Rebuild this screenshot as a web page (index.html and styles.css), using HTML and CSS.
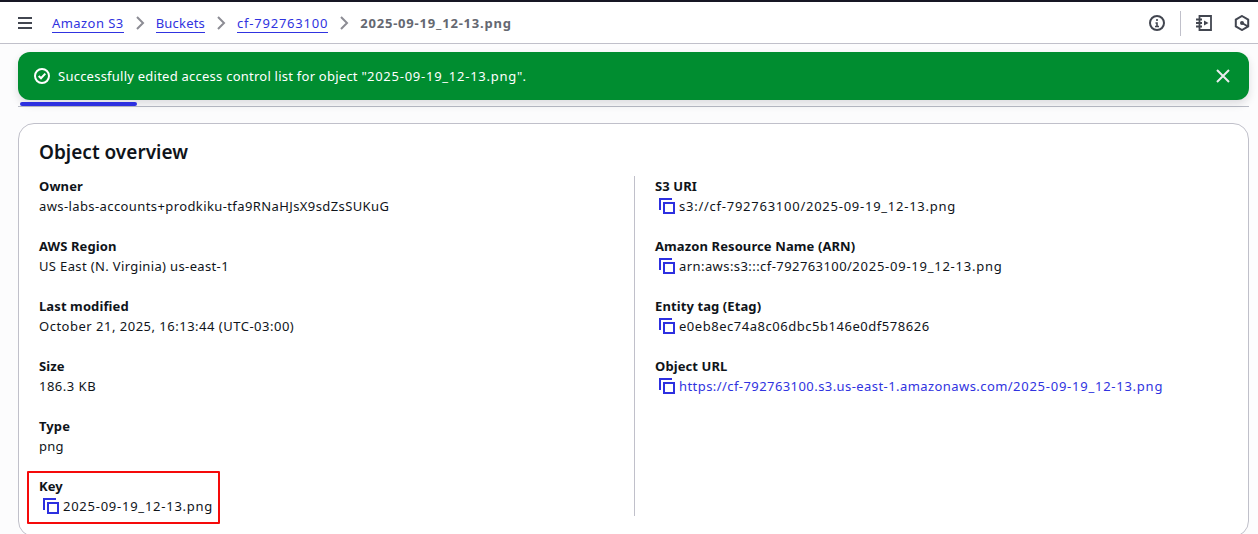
FILE: index.html
```html
<!DOCTYPE html>
<html lang="en">
<head>
<meta charset="utf-8">
<title>Object overview</title>
<link rel="stylesheet" href="styles.css">
</head>
<body>
<svg class="defs" width="0" height="0">
  <symbol id="copy" viewBox="0 0 16 16"><path d="M1 12V1h12M5 5h10v10H5z" fill="none" stroke="currentColor" stroke-width="2"/></symbol>
  <symbol id="chevron" viewBox="0 0 10 14"><path d="M2 1l6 6-6 6" fill="none" stroke="currentColor" stroke-width="2"/></symbol>
</svg>
<header class="topbar">
  <svg class="menu" viewBox="0 0 14 12"><path d="M0 1h14M0 6h14M0 11h14" stroke="currentColor" stroke-width="2"/></svg>
  <nav class="crumbs">
    <a class="link c1">Amazon S3</a>
    <svg class="chev"><use href="#chevron"/></svg>
    <a class="link c2">Buckets</a>
    <svg class="chev"><use href="#chevron"/></svg>
    <a class="link c3">cf-792763100</a>
    <svg class="chev"><use href="#chevron"/></svg>
    <span class="current">2025-09-19_12-13.png</span>
  </nav>
  <div class="tools">
    <svg class="tool" viewBox="0 0 16 16" fill="none" stroke="currentColor" stroke-width="2"><circle cx="8" cy="8" r="7"/><path d="M8 4v2M6.500 8H8v4M6 11.500h4" stroke-width="1.600"/></svg>
    <span class="rule"></span>
    <svg class="tool t2" viewBox="0 0 16 16" fill="none" stroke="currentColor" stroke-width="1.800"><path d="M3.500 1H15v14H3.500zM0 4.500h6M0 8h6M0 11.500h6"/><path d="M8 5.500v5L12.500 8z" fill="currentColor" stroke="none"/></svg>
    <svg class="tool t3" viewBox="0 0 16 16" fill="none" stroke="currentColor" stroke-width="2"><path d="M8 1l6.200 3.600v6.800L8 15l-6.200-3.600V4.600zM8 8l6 3.500"/><circle cx="8" cy="8" r="2" fill="currentColor" stroke="none"/></svg>
  </div>
</header>
<main class="page">
  <div class="flash">
    <svg class="ok" viewBox="0 0 16 16" fill="none" stroke="currentColor" stroke-width="2"><circle cx="8" cy="8" r="7"/><path d="M4.700 8l2.300 2.300L11.300 5.600"/></svg>
    <span class="message">Successfully edited access control list for object "<span class="file">2025-09-19_12-13.png</span>".</span>
    <svg class="close" viewBox="0 0 14 14"><path d="M1 1l12 12M13 1L1 13" stroke="currentColor" stroke-width="2"/></svg>
  </div>
  <div class="tabs"><span class="active"></span></div>
  <section class="card">
    <h2>Object overview</h2>
    <div class="columns">
      <dl class="col">
        <div><dt>Owner</dt><dd class="v-owner">aws-labs-accounts+prodkiku-tfa9RNaHJsX9sdZsSUKuG</dd></div>
        <div><dt>AWS Region</dt><dd class="v-region">US East (N. Virginia) us-east-1</dd></div>
        <div><dt>Last modified</dt><dd class="v-date">October 21, 2025, 16:13:44 (UTC-03:00)</dd></div>
        <div><dt>Size</dt><dd class="v-date">186.3 KB</dd></div>
        <div><dt>Type</dt><dd class="v-type">png</dd></div>
        <div class="key"><dt>Key</dt><dd class="copyable"><svg class="copy"><use href="#copy"/></svg><span class="file">2025-09-19_12-13.png</span></dd></div>
      </dl>
      <dl class="col right">
        <div><dt>S3 URI</dt><dd class="copyable"><svg class="copy"><use href="#copy"/></svg><span class="file">s3://cf-792763100/2025-09-19_12-13.png</span></dd></div>
        <div><dt>Amazon Resource Name (ARN)</dt><dd class="copyable v-arn"><svg class="copy"><use href="#copy"/></svg><span>arn:aws:s3:::cf-792763100/<span class="file">2025-09-19_12-13.png</span></span></dd></div>
        <div><dt>Entity tag (Etag)</dt><dd class="copyable v-etag"><svg class="copy"><use href="#copy"/></svg>e0eb8ec74a8c06dbc5b146e0df578626</dd></div>
        <div><dt>Object URL</dt><dd class="copyable v-url"><svg class="copy"><use href="#copy"/></svg><a>https://cf-792763100.s3.us-east-1.amazonaws.com/<span class="file">2025-09-19_12-13.png</span></a></dd></div>
      </dl>
    </div>
  </section>
</main>
</body>
</html>
```
FILE: styles.css
```css
* { box-sizing: border-box; }
body { margin: 0; height: 534px; overflow: hidden; background: #fcfcfd; color: #0f141a; font: 13px/20px "Noto Sans", sans-serif; }
svg { display: block; flex: none; }
.defs { position: absolute; }
.topbar { display: flex; align-items: center; height: 44px; padding: 1px 8px 0 18px; background: #fff; border-top: 2px solid #161624; border-bottom: 1px solid #c0c0ca; color: #424650; }
.menu { width: 14px; height: 12px; }
.crumbs { display: flex; align-items: center; margin-left: 20px; }
.link { color: #3033e0; line-height: 18px; border-bottom: 1px solid #3033e0; white-space: nowrap; }
.c1 { letter-spacing: .44px; }
.c2 { letter-spacing: .2px; }
.c3 { letter-spacing: .78px; }
.chev { width: 10px; height: 14px; margin: 0 11px; color: #8c8c94; }
.current { color: #656871; font-weight: 700; letter-spacing: .8px; white-space: nowrap; }
.tools { display: flex; align-items: center; margin-left: auto; }
.tool { width: 16px; height: 16px; }
.rule { width: 1px; height: 25px; margin: 0 15px; background: #c0c0ca; }
.t3 { margin-left: 22px; }
.page { padding: 8px 9px 0 18px; }
.flash { position: relative; z-index: 1; display: flex; align-items: center; height: 48px; padding: 0 19px 0 16px; border-radius: 12px; background: #008d30; color: #fff; box-shadow: 0 4px 8px rgba(0,7,22,.13); }
.ok { width: 16px; height: 16px; margin-right: 8px; }
.message { letter-spacing: .24px; }
.close { width: 14px; height: 14px; margin-left: auto; color: #ebebf0; }
.tabs { display: flex; height: 7px; padding: 2px 2px 0; border-bottom: 1px solid #b9bcc6; }
.active { position: relative; z-index: 2; width: 117px; height: 4px; border-radius: 2px; background: #2d30e0; }
.card { height: 414px; margin-top: 16px; padding: 16px 20px; border: 1px solid #c0c0ca; border-radius: 16px; background: #fff; }
h2 { margin: 0; font-size: 19px; line-height: 24px; font-weight: 600; }
.columns { display: grid; grid-template-columns: 595px 1fr; margin-top: 12px; }
.col { display: grid; grid-auto-rows: 40px; gap: 20px; margin: 0; height: 340px; align-content: start; }
.right { padding-left: 20px; border-left: 1px solid #c0c0ca; }
dt { font-weight: 700; letter-spacing: .1px; white-space: nowrap; }
dd { margin: 0; white-space: nowrap; }
.copyable { display: flex; align-items: center; padding-left: 4px; }
.copy { width: 16px; height: 16px; margin-right: 4px; color: #2d30e0; }
.file { letter-spacing: .75px; }
.v-owner { letter-spacing: .4px; }
.v-region { letter-spacing: .36px; }
.v-date { letter-spacing: .5px; }
.v-type { letter-spacing: .2px; }
.v-arn, .v-url { letter-spacing: .43px; }
.v-etag { letter-spacing: .53px; }
.v-url a { color: #3033e0; }
.key { position: relative; }
.key::after { content: ""; position: absolute; box-sizing: border-box; left: -12px; top: -5px; width: 193px; height: 53px; border: 2px solid #f50a0a; border-radius: 1px; }
```
